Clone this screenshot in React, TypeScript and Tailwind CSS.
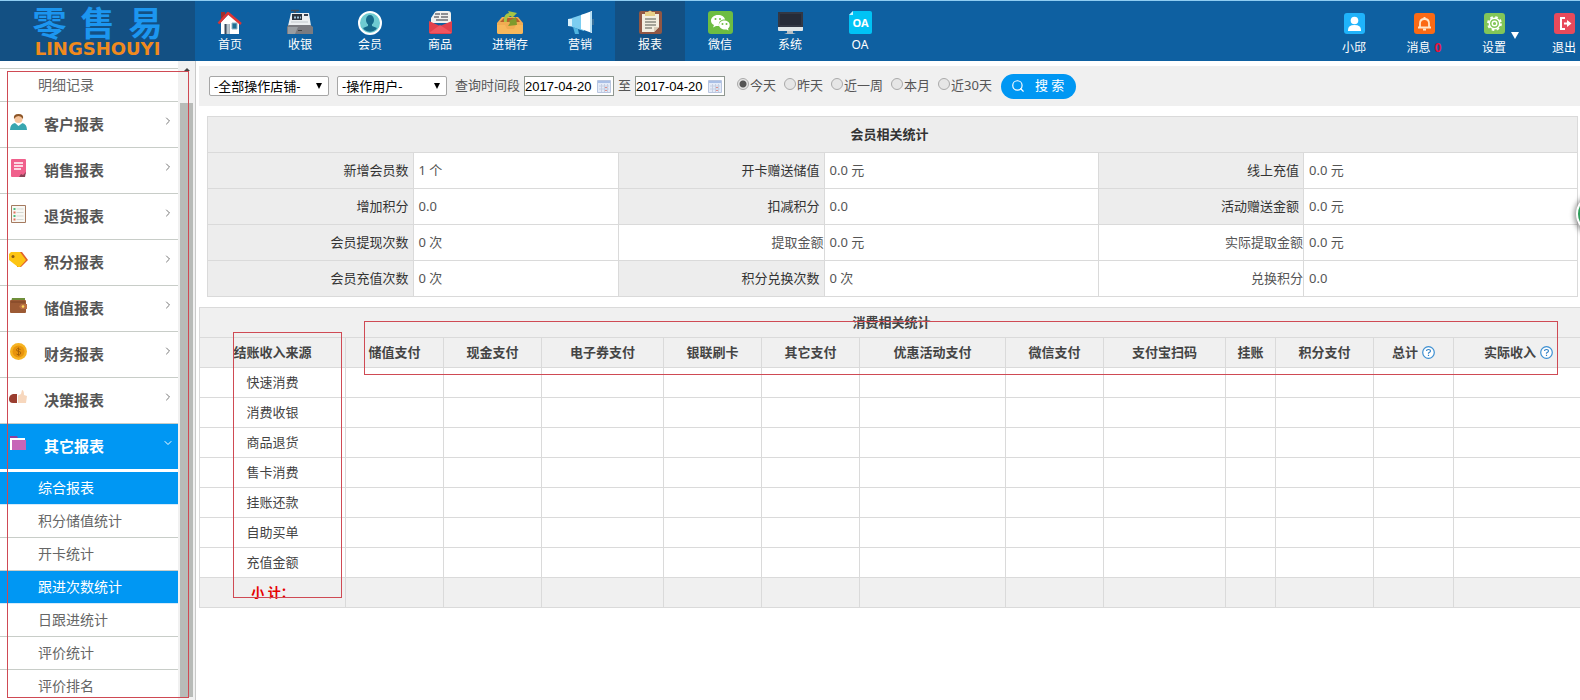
import React, { useState } from 'react';
import clsx from 'clsx';
import { ChevronDown, ChevronRight, Search } from 'lucide-react';

interface NavItem {
    label: string;
    icon: React.ReactNode;
}

function NavIcon({ children }: { children: React.ReactNode }) {
    return (
        <svg viewBox="0 0 28 26" className="h-[26px] w-7" aria-hidden="true">
            {children}
        </svg>
    );
}

function MenuIcon({ children }: { children: React.ReactNode }) {
    return (
        <svg viewBox="0 0 20 20" className="h-5 w-5 shrink-0" aria-hidden="true">
            {children}
        </svg>
    );
}

function UserIcon({ children }: { children: React.ReactNode }) {
    return (
        <svg viewBox="0 0 21 21" className="h-[21px] w-[21px]" aria-hidden="true">
            {children}
        </svg>
    );
}

const navItems: NavItem[] = [
    {
        label: '首页',
        icon: (
            <NavIcon>
                <path d="M5 3h4v8H5z" fill="#9b2f2f" />
                <path d="M5 13L13 5l10 9v11H5z" fill="#fff" />
                <path d="M8.500 15h5v10h-5z" fill="#3a4a5c" />
                <path d="M10.500 15h3v10h-3z" fill="#b9c4cc" />
                <path d="M16 14h5v6h-5z" fill="#1e6f93" stroke="#8fb6c9" />
                <path d="M2.500 14.500L12 4l13 11" fill="none" stroke="#dc3434" strokeWidth="2.500" strokeLinejoin="round" />
            </NavIcon>
        ),
    },
    {
        label: '收银',
        icon: (
            <NavIcon>
                <path d="M9 1v3M5 1.500h8" stroke="#444c57" strokeWidth="1.500" />
                <path d="M5 4h18l2 13H2z" fill="#eceff1" />
                <path d="M6 5h10v6H6z" fill="#2b3440" />
                <path d="M8 8.500h7" stroke="#9fc1d6" strokeWidth="2" strokeDasharray="2 1" />
                <path d="M18 5h4v2h-4z" fill="#3a4250" />
                <path d="M5 13h17" stroke="#c3c8cc" />
                <path d="M1 18l1.500-2h22l2.500 2v7H1z" fill="#7b7b80" />
                <path d="M2 18h10l-3 7H2z" fill="#999da1" />
                <path d="M12 21h4v1h-4z" fill="#444" />
            </NavIcon>
        ),
    },
    {
        label: '会员',
        icon: (
            <NavIcon>
                <circle cx="14" cy="14" r="11" fill="#6fcbd1" stroke="#fff" strokeWidth="2" />
                <ellipse cx="14" cy="11" rx="4" ry="5" fill="#166a8c" />
                <path d="M12 14h4v3l5 2c-3 5-11 5-14 0l5-2z" fill="#166a8c" />
            </NavIcon>
        ),
    },
    {
        label: '商品',
        icon: (
            <NavIcon>
                <path d="M5 9l4-6q1-1 3-1h10q3 0 3 3v9H5z" fill="#f1f1ee" />
                <path d="M9 5h5M8 8h5M15 5h7M15 8h7M10 11h12" stroke="#6d6f75" strokeWidth="1.500" />
                <path d="M3 12l11 5 12-5v11q0 2-2 2H5q-2 0-2-2z" fill="#e2414c" />
                <path d="M3 24l11-8 12 8z" fill="#f25560" />
            </NavIcon>
        ),
    },
    {
        label: '进销存',
        icon: (
            <NavIcon>
                <path d="M1 14l5-6h16l5 6v9q0 2-2 2H3q-2 0-2-2z" fill="#f1ac52" />
                <path d="M4 13l4-4h13l3 4z" fill="#b5602c" />
                <path d="M8 13q-1-8 5-9l-1-2 9 2-5 5-1-2q-5 1-4 6z" fill="#a7c443" />
                <path d="M13 12l7-4 1 8-9 1 2-3z" fill="#7f9a2c" />
                <path d="M1 16h8l2 4h7l2-4h7v7q0 2-2 2H3q-2 0-2-2z" fill="#f7b85c" />
            </NavIcon>
        ),
    },
    {
        label: '营销',
        icon: (
            <NavIcon>
                <path d="M2 10l7-1v9l-7-1z" fill="#d9f1fb" />
                <path d="M6 9l12-4v17L6 18z" fill="#7ccdf0" />
                <path d="M15 6l11-4v22l-11-4z" fill="#fff" />
                <path d="M24 3h2v20h-2z" fill="#b7e0f4" />
                <path d="M7 18l5 2 1 5H9z" fill="#4fb4e0" />
                <path d="M27 10v6" stroke="#3c7199" strokeWidth="2" />
            </NavIcon>
        ),
    },
    {
        label: '报表',
        icon: (
            <NavIcon>
                <rect x="3" y="2" width="23" height="23" rx="2" fill="#925744" />
                <path d="M6 5h17v13l-5 5H6z" fill="#f3eee0" />
                <path d="M18 23v-5h5z" fill="#d8cdb8" />
                <path d="M9 10h11M9 13h11M9 16h11M9 19h7" stroke="#8b8a80" strokeWidth="1.500" />
                <path d="M9 3h3q2-3 4 0h3v4H9z" fill="#e8cf87" />
            </NavIcon>
        ),
    },
    {
        label: '微信',
        icon: (
            <NavIcon>
                <rect x="2" y="2" width="25" height="23" rx="3" fill="#6dbd42" />
                <path d="M12 6c-4 0-7 2.500-7 5.500 0 2 1 3.500 3 4.500l-1 2.500 3-1.500h3c-1-5 3-7 6-6.500C18.500 8 16 6 12 6z" fill="#fff" />
                <path d="M18.500 11.500c-3 0-5.500 2-5.500 4.500s3 4.500 6 4.500h1.500l2 1-.5-2c3.500-2.500 1.500-8-3.500-8z" fill="#fff" />
                <g fill="#6dbd42">
                    <circle cx="9.500" cy="10" r="1" />
                    <circle cx="14" cy="10" r="1" />
                    <circle cx="16.500" cy="15" r="1" />
                    <circle cx="20.500" cy="15" r="1" />
                </g>
            </NavIcon>
        ),
    },
    {
        label: '系统',
        icon: (
            <NavIcon>
                <rect x="2" y="3" width="25" height="19" rx="1" fill="#dfe5e8" />
                <path d="M2 3h25v15H2z" fill="#323744" />
                <path d="M4 5h21v11H4z" fill="#262b38" />
                <path d="M11 22h6v2l3 1H8l3-1z" fill="#b8c0c5" />
            </NavIcon>
        ),
    },
    {
        label: 'OA',
        icon: (
            <NavIcon>
                <path d="M7 2h17q2 0 2 2v19q0 2-2 2H5q-2 0-2-2V6z" fill="#00c3f5" />
                <path d="M3 6l4-4v4z" fill="#c9f3ff" />
                <text x="14.500" y="18" textAnchor="middle" fontSize="11" fontWeight="700" fill="#fff" fontFamily="Noto Sans, sans-serif">
                    OA
                </text>
            </NavIcon>
        ),
    },
];

const userItems: NavItem[] = [
    {
        label: '小邱',
        icon: (
            <UserIcon>
                <rect width="21" height="21" rx="3" fill="#1fb3fb" />
                <circle cx="10.500" cy="7.500" r="3.800" fill="#fff" />
                <path d="M4 17q0-5 6.500-5t6.500 5v1H4z" fill="#fff" />
            </UserIcon>
        ),
    },
    {
        label: '消息',
        icon: (
            <UserIcon>
                <rect width="21" height="21" rx="3" fill="#fb6a14" />
                <path d="M4 14.500h13M6 14v-3.500q0-4.500 4.500-4.500t4.500 4.500V14" fill="none" stroke="#ffe6c8" strokeWidth="1.800" />
                <path d="M9.500 4h2v2h-2zM9 15.500h3v2H9z" fill="#ffe6c8" />
            </UserIcon>
        ),
    },
    {
        label: '设置',
        icon: (
            <UserIcon>
                <rect width="21" height="21" rx="3" fill="#82c658" />
                <circle cx="10.500" cy="10.500" r="6.500" fill="none" stroke="#fff" strokeWidth="1.800" strokeDasharray="2.600 2.500" />
                <circle cx="10.500" cy="10.500" r="5.200" fill="none" stroke="#fff" strokeWidth="1.400" />
                <circle cx="10.500" cy="10.500" r="2.300" fill="none" stroke="#fff" strokeWidth="1.400" />
            </UserIcon>
        ),
    },
    {
        label: '退出',
        icon: (
            <UserIcon>
                <rect width="21" height="21" rx="3" fill="#e84a5b" />
                <path d="M11 5H7v11h4" fill="none" stroke="#fff" strokeWidth="2" />
                <path d="M10 9.500h3V7l4.500 3.500L13 14v-2.500h-3z" fill="#fff" />
            </UserIcon>
        ),
    },
];

const menuGroups: NavItem[] = [
    {
        label: '客户报表',
        icon: (
            <MenuIcon>
                <path d="M2 18q0-6 5-7h7q5 1 5 7z" fill="#38a6b0" />
                <path d="M7 11l3.500 3 4-3-1-2h-5z" fill="#fff" />
                <circle cx="10.500" cy="7" r="4" fill="#f6c49c" />
                <path d="M6 7q-1-5 4.500-5T15 7q-2-3-4.500-3T6 7z" fill="#8c5527" />
            </MenuIcon>
        ),
    },
    {
        label: '销售报表',
        icon: (
            <MenuIcon>
                <path d="M4 1h13q1 0 1 1v13l-4 4H4q-1 0-1-1V2q0-1 1-1z" fill="#f0608c" />
                <path d="M6 5h9M6 8h9M6 11h7" stroke="#fff" strokeWidth="1.500" />
                <path d="M11 19l2-3 2 1 3-3-1 5z" fill="#8b4155" />
            </MenuIcon>
        ),
    },
    {
        label: '退货报表',
        icon: (
            <MenuIcon>
                <path d="M3.500 1.500h14v17h-14z" fill="#f8f8f4" stroke="#a57a60" />
                <path d="M8.500 5h7M8.500 8.500h7M8.500 12h7M8.500 15.500h7" stroke="#d5d8d3" />
                <path d="M5.500 5h2M5.500 12h2" stroke="#4dbb7d" strokeWidth="2" />
                <path d="M5.500 8.500h2M5.500 15.500h2" stroke="#e0705c" strokeWidth="2" />
            </MenuIcon>
        ),
    },
    {
        label: '积分报表',
        icon: (
            <MenuIcon>
                <path d="M9 2h5l6 8-7 7H9z" fill="#e0602c" />
                <path d="M1 4l2-2h9l6 8-6 7h-2l-9-7z" fill="#fdc513" />
                <circle cx="5" cy="6.500" r="1.500" fill="#8a5a14" />
            </MenuIcon>
        ),
    },
    {
        label: '储值报表',
        icon: (
            <MenuIcon>
                <path d="M4 2h13v4H3z" fill="#6f8f3a" />
                <rect x="2" y="4" width="16" height="13" rx="1" fill="#9c5a34" />
                <path d="M3 6h14" stroke="#7d4324" />
                <path d="M13 8h6v5h-6l-2-2.500z" fill="#b87044" />
                <circle cx="15" cy="10.500" r="1.300" fill="#ffd75a" />
            </MenuIcon>
        ),
    },
    {
        label: '财务报表',
        icon: (
            <MenuIcon>
                <circle cx="10.500" cy="9.500" r="8.500" fill="#f6b322" />
                <circle cx="10.500" cy="9.500" r="6" fill="#e8940c" />
                <path d="M12.500 7.500q-4-2-4 0t2.500 2 1.500 2.500-4 0M10.500 5.500v8" fill="none" stroke="#a86408" />
            </MenuIcon>
        ),
    },
    {
        label: '决策报表',
        icon: (
            <MenuIcon>
                <path d="M9 8l4-2 1-4q2 0 2 5l3 1-1 7H9z" fill="#f7d7bd" />
                <path d="M5 6q-4 1-4 5t4 4h5V6z" fill="#9a3d2f" />
                <path d="M9 6h1v9H9z" fill="#fff" />
            </MenuIcon>
        ),
    },
    {
        label: '其它报表',
        icon: (
            <MenuIcon>
                <path d="M2 2h7l1 2h7v4H2z" fill="#8d3f9b" />
                <path d="M2 4h15v12H2z" fill="#fff" />
                <path d="M4 6h14v10H4z" fill="#c765b8" />
            </MenuIcon>
        ),
    },
];

const subItems = ['综合报表', '积分储值统计', '开卡统计', '跟进次数统计', '日跟进统计', '评价统计', '评价排名'];
const highlighted = ['综合报表', '跟进次数统计'];

const ranges = ['今天', '昨天', '近一周', '本月', '近30天'];

interface Stat {
    label: string;
    value: string;
    plain?: boolean;
}

const memberStats: Stat[][] = [
    [
        { label: '新增会员数', value: '1 个' },
        { label: '开卡赠送储值', value: '0.0 元' },
        { label: '线上充值', value: '0.0 元' },
    ],
    [
        { label: '增加积分', value: '0.0' },
        { label: '扣减积分', value: '0.0' },
        { label: '活动赠送金额', value: '0.0 元' },
    ],
    [
        { label: '会员提现次数', value: '0 次' },
        { label: '提取金额', value: '0.0 元', plain: true },
        { label: '实际提取金额', value: '0.0 元', plain: true },
    ],
    [
        { label: '会员充值次数', value: '0 次' },
        { label: '积分兑换次数', value: '0 次' },
        { label: '兑换积分', value: '0.0', plain: true },
    ],
];

const payColumns = [
    { label: '结账收入来源', width: 'w-[146px]' },
    { label: '储值支付', width: 'w-[98px]' },
    { label: '现金支付', width: 'w-[98px]' },
    { label: '电子券支付', width: 'w-[122px]' },
    { label: '银联刷卡', width: 'w-[98px]' },
    { label: '其它支付', width: 'w-[98px]' },
    { label: '优惠活动支付', width: 'w-[146px]' },
    { label: '微信支付', width: 'w-[98px]' },
    { label: '支付宝扫码', width: 'w-[122px]' },
    { label: '挂账', width: 'w-[50px]' },
    { label: '积分支付', width: 'w-[98px]' },
    { label: '总计', width: 'w-20', help: true },
    { label: '实际收入', width: 'w-auto', help: true },
];

const paySources = ['快速消费', '消费收银', '商品退货', '售卡消费', '挂账还款', '自助买单', '充值金额'];

function Header() {
    return (
        <header className="flex h-[61px] shrink-0 overflow-hidden border-t border-[#8fcdf2] bg-[#0e60a1] text-xs text-white">
            <div className="flex w-[195px] shrink-0 flex-col items-center bg-[#135083] pt-1.5">
                <div className="flex gap-3.5 text-[34px] leading-8 font-bold text-[#1c96f0]">
                    <span>零</span>
                    <span>售</span>
                    <span>易</span>
                </div>
                <div className="pt-0.5 font-['DejaVu_Sans',sans-serif] text-lg leading-4 font-bold text-[#f08a1d]">LINGSHOUYI</div>
            </div>
            <nav className="flex flex-1">
                {navItems.map((item) => (
                    <a
                        key={item.label}
                        href="#"
                        className={clsx(
                            'flex w-[70px] shrink-0 flex-col items-center gap-0.5 pt-2',
                            item.label === '报表' && 'bg-[#135083]'
                        )}
                    >
                        {item.icon}
                        <span className="leading-4">{item.label}</span>
                    </a>
                ))}
            </nav>
            <div className="-mr-[19px] flex">
                {userItems.map((item) => (
                    <a key={item.label} href="#" className="relative flex w-[70px] flex-col items-center gap-1 pt-3">
                        {item.icon}
                        <span className="leading-5">
                            {item.label}
                            {item.label === '消息' && <b className="ml-1 text-[#e8103c]">0</b>}
                        </span>
                        {item.label === '设置' && (
                            <svg viewBox="0 0 8 7" className="absolute top-[31px] right-2.5 h-[7px] w-2" aria-hidden="true">
                                <path d="M0 0h8L4 7z" fill="#fff" />
                            </svg>
                        )}
                    </a>
                ))}
            </div>
        </header>
    );
}

function Sidebar() {
    return (
        <aside className="relative flex w-[196px] shrink-0 overflow-hidden border-r border-[#c9c9c9]">
            <nav className="w-[178px] shrink-0 pt-[7px]">
                <a href="#" className="flex h-[34px] items-center border-y border-[#c8cdc8] pl-[38px] text-sm text-[#666]">
                    明细记录
                </a>
                {menuGroups.map((group) => {
                    const open = group.label === '其它报表';
                    return (
                        <button
                            key={group.label}
                            type="button"
                            className={clsx(
                                'flex h-[46px] w-full items-center border-b pr-1 pl-2 text-left',
                                open ? 'border-white bg-[#0097f3] text-white' : 'border-[#c8cdc8] text-[#555]'
                            )}
                        >
                            <span className="pb-1.5">{group.icon}</span>
                            <span className="flex-1 pl-4 text-[15px] font-bold">{group.label}</span>
                            <span className="pb-2">
                                {open ? (
                                    <ChevronDown className="h-3 w-3" />
                                ) : (
                                    <ChevronRight className="h-3 w-3 text-[#777]" />
                                )}
                            </span>
                        </button>
                    );
                })}
                <div className="pt-0.5">
                    {subItems.map((item) => (
                        <a
                            key={item}
                            href="#"
                            className={clsx(
                                'flex h-[33px] items-center border-b pl-[38px] text-sm',
                                highlighted.includes(item)
                                    ? 'border-[#d5eafa] bg-[#0097f3] text-white'
                                    : 'border-[#c8cdc8] text-[#666]'
                            )}
                        >
                            {item}
                        </a>
                    ))}
                </div>
            </nav>
            {/* Scrollbar */}
            <div className="flex flex-1 flex-col items-center bg-[#f1f1f1]">
                <svg viewBox="0 0 6 3" className="mt-[7px] h-[3px] w-1.5" aria-hidden="true">
                    <path d="M0 3L3 0l3 3z" fill="#444" />
                </svg>
                <div className="mt-8 mb-[3px] w-[13px] flex-1 bg-[#b8bbb8]" />
            </div>
            <div className="pointer-events-none absolute top-2.5 right-1.5 bottom-0.5 left-[7px] border border-[#cf4a54]" />
        </aside>
    );
}

function DateField({ id, label }: { id: string; label: string }) {
    const [value, setValue] = useState('2017-04-20');

    return (
        <>
            <label htmlFor={id}>{label}</label>
            <span className="relative flex">
                <input
                    id={id}
                    type="text"
                    value={value}
                    onChange={(e) => setValue(e.target.value)}
                    className="h-5 w-[90px] border border-[#8f9790] bg-white font-['Liberation_Sans',sans-serif] text-black outline-none"
                />
                <svg viewBox="0 0 14 13" className="absolute top-1 right-[3px] h-[13px] w-3.5" aria-hidden="true">
                    <path d="M.5.500h13v12H.500z" fill="#e4ebf8" stroke="#b9c6e0" />
                    <path d="M1 1h12v2H1z" fill="#a9bfe6" />
                    <path d="M2 6h10M2 9h10M4.500 4v8M7.500 4v8M10.500 4v8" stroke="#c6cfe2" />
                    <path d="M8 7h2v1H8zM8 10h2v1H8z" fill="#e0908c" />
                </svg>
            </span>
        </>
    );
}

function FilterSelect({ label, width }: { label: string; width: string }) {
    return (
        <span className="relative flex">
            <select
                aria-label={label}
                className={clsx('h-5 appearance-none rounded-xs border border-[#a6a6a6] bg-white pl-1 text-[13px] leading-4 text-black', width)}
            >
                <option>-{label}-</option>
            </select>
            <svg viewBox="0 0 6 6" className="pointer-events-none absolute top-[7px] right-[7px] h-1.5 w-1.5" aria-hidden="true">
                <path d="M0 0h6L3 6z" fill="#000" />
            </svg>
        </span>
    );
}

function FilterBar() {
    const [range, setRange] = useState('今天');

    return (
        <form className="flex h-10 shrink-0 items-center bg-[#f0f0f0] pl-2.5 text-[13px] whitespace-nowrap text-[#555]">
            <div className="flex gap-2">
                <FilterSelect label="全部操作店铺" width="w-[120px]" />
                <FilterSelect label="操作用户" width="w-[110px]" />
            </div>
            <div className="flex items-center gap-1 pl-2">
                <DateField id="start" label="查询时间段" />
                <DateField id="end" label="至" />
            </div>
            <div className="flex gap-2 pr-[9px] pl-3">
                {ranges.map((item) => (
                    <label key={item} className="flex items-center gap-px">
                        <input
                            type="radio"
                            name="range"
                            checked={range === item}
                            onChange={() => setRange(item)}
                            className="mb-1 h-3 w-3 appearance-none rounded-full border border-[#aaa] bg-[#e6e6e6] checked:bg-[radial-gradient(circle,#555_3px,#e6e6e6_4px)]"
                        />
                        {item}
                    </label>
                ))}
            </div>
            <button type="button" className="flex h-[25px] items-center gap-2.5 rounded-full bg-[#0097f3] pr-3 pl-2.5 text-white">
                <Search className="h-3.5 w-3.5" strokeWidth={2} />
                搜 索
            </button>
        </form>
    );
}

function MemberStats() {
    return (
        <table className="w-full table-fixed border-collapse text-[13px]">
            <colgroup>
                <col className="w-[15%]" />
                <col className="w-[15%]" />
                <col className="w-[15%]" />
                <col className="w-[20%]" />
                <col className="w-[15%]" />
                <col className="w-[20%]" />
            </colgroup>
            <thead>
                <tr className="h-9 bg-[#ededed]">
                    <th colSpan={6} className="border border-[#dadada] p-0 pr-1.5 text-[#333]">
                        会员相关统计
                    </th>
                </tr>
            </thead>
            <tbody>
                {memberStats.map((row, index) => (
                    <tr key={index} className="h-9">
                        {row.map((stat) => (
                            <React.Fragment key={stat.label}>
                                <th
                                    scope="row"
                                    className={clsx(
                                        'border border-[#dadada] p-0 text-right font-normal',
                                        stat.plain ? 'text-[#555]' : 'bg-[#ededed] pr-1 text-[#333]'
                                    )}
                                >
                                    {stat.label}
                                </th>
                                <td className="border border-[#dadada] p-0 pl-[5px] text-[#555]">{stat.value}</td>
                            </React.Fragment>
                        ))}
                    </tr>
                ))}
            </tbody>
        </table>
    );
}

function HelpIcon() {
    return (
        <svg viewBox="0 0 13 13" className="h-[13px] w-[13px]" aria-hidden="true">
            <circle cx="6.500" cy="6.500" r="5.800" fill="#fff" stroke="#3d8fd1" strokeWidth="1.200" />
            <path d="M4.500 5q0-1.500 2-1.500t2 1.500q0 1-2 2v.8M6.500 8.800v1.200" fill="none" stroke="#2f7fc4" strokeWidth="1.200" />
        </svg>
    );
}

function PaymentStats() {
    return (
        <div className="relative -mr-1">
            <table className="w-full table-fixed border-collapse text-[13px] text-[#444]">
                <colgroup>
                    {payColumns.map((col) => (
                        <col key={col.label} className={col.width} />
                    ))}
                </colgroup>
                <thead>
                    <tr className="h-[30px] bg-[#f0f0f0]">
                        <th colSpan={payColumns.length} className="border border-[#dadada] p-0">
                            消费相关统计
                        </th>
                    </tr>
                    <tr className="h-[30px] bg-[#f0f0f0]">
                        {payColumns.map((col) => (
                            <th key={col.label} className="border border-[#dadada] p-0">
                                <span className="inline-flex items-center gap-1">
                                    {col.label}
                                    {col.help && <HelpIcon />}
                                </span>
                            </th>
                        ))}
                    </tr>
                </thead>
                <tbody>
                    {paySources.map((source) => (
                        <tr key={source} className="h-[30px]">
                            <td className="border border-[#dadada] p-0 text-center">{source}</td>
                            {payColumns.slice(1).map((col) => (
                                <td key={col.label} className="border border-[#dadada] p-0" />
                            ))}
                        </tr>
                    ))}
                </tbody>
                <tfoot>
                    <tr className="h-[30px] bg-[#f0f0f0]">
                        <td className="border border-[#dadada] p-0 text-center font-bold text-[#e60000]">小 计：</td>
                        {payColumns.slice(1).map((col) => (
                            <td key={col.label} className="border border-[#dadada] p-0" />
                        ))}
                    </tr>
                </tfoot>
            </table>
            {/* Highlight frames over the source column and the header row */}
            <div className="pointer-events-none absolute top-[25px] left-[34px] h-[266px] w-[109px] border border-[#cf4a54]" />
            <div className="pointer-events-none absolute top-3.5 right-[26px] left-[165px] h-[54px] border border-[#cf4a54]" />
        </div>
    );
}

export default function App() {
    return (
        <div className="relative flex h-screen flex-col overflow-hidden bg-white font-['Noto_Sans','Noto_Sans_CJK_SC',sans-serif]">
            <Header />
            <div className="flex min-h-0 flex-1">
                <Sidebar />
                <main className="min-w-0 flex-1 pt-[5px] pl-[3px]">
                    <FilterBar />
                    <div className="pt-2.5 pr-0.5 pb-2.5 pl-2">
                        <MemberStats />
                    </div>
                    <PaymentStats />
                </main>
            </div>
            {/* Floating helper, mostly off the right edge */}
            <div className="absolute top-[194px] -right-9 h-10 w-10 rounded-full border-2 border-white bg-[#2e9e5b] shadow-[0_1px_5px_2px_rgba(0,0,0,0.4)]" />
        </div>
    );
}
